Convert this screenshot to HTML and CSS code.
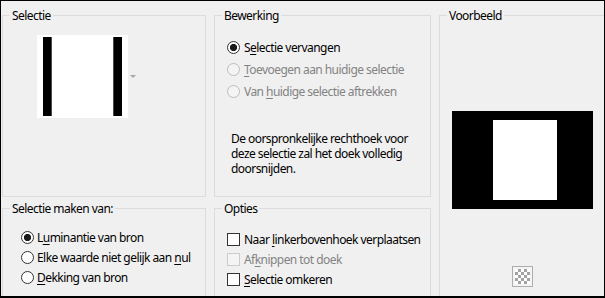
FILE: index.html
```html
<!DOCTYPE html>
<html lang="nl">
<head>
  <meta charset="UTF-8">
  <title>Selectie uit masker</title>
  <link rel="stylesheet" href="styles.css">
</head>
<body>

  <div class="dialog">
    <fieldset class="group group-selection">
      <legend>Selectie</legend>
      <div class="thumb-row">
        <div class="thumb">
          <span class="bar bar-left"></span>
          <span class="bar bar-right"></span>
        </div>
        <span class="drop-arrow"></span>
      </div>
    </fieldset>

    <fieldset class="group group-edit">
      <legend>Bewerking</legend>
      <div class="choices wide">
        <div class="choice"><span class="radio checked"></span><span>S<u>e</u>lectie vervangen</span></div>
        <div class="choice disabled"><span class="radio"></span><span><u>T</u>oevoegen aan huidige selectie</span></div>
        <div class="choice disabled"><span class="radio"></span><span>Van <u>h</u>uidige selectie aftrekken</span></div>
      </div>
      <p class="note">De oorspronkelijke rechthoek voor deze selectie zal het doek volledig doorsnijden.</p>
    </fieldset>

    <fieldset class="group group-preview">
      <legend>Voorbeeld</legend>
      <div class="preview">
        <div class="preview-inner"></div>
      </div>
      <div class="checker-btn"><span class="checker"></span></div>
    </fieldset>

    <fieldset class="group group-source">
      <legend>Selectie maken van:</legend>
      <div class="choices">
        <div class="choice"><span class="radio checked"></span><span>L<u>u</u>minantie van bron</span></div>
        <div class="choice"><span class="radio"></span><span>Elke waarde niet gelijk aan <u>n</u>ul</span></div>
        <div class="choice"><span class="radio"></span><span><u>D</u>ekking van bron</span></div>
      </div>
    </fieldset>

    <fieldset class="group group-options">
      <legend>Opties</legend>
      <div class="choices">
        <div class="choice"><span class="check"></span><span>Naar <u>l</u>inkerbovenhoek verplaatsen</span></div>
        <div class="choice disabled"><span class="check"></span><span>Af<u>k</u>nippen tot doek</span></div>
        <div class="choice"><span class="check"></span><span><u>S</u>electie omkeren</span></div>
      </div>
    </fieldset>
  </div>

</body>
</html>
```

FILE: styles.css
```css
body {
  margin: 0;
  font-family: 'Noto Sans', 'Open Sans', sans-serif;
  font-size: 12px;
  letter-spacing: -0.55px;
  color: #000;
  background-color: #f0f0f0;
}

.dialog {
  width: 605px;
  height: 298px;
  box-sizing: border-box;
  border: 1px solid #000;
  border-bottom-width: 2px;
  padding: 7px 0 0 1px;
  background-color: #f0f0f0;
  overflow: hidden;
  display: grid;
  grid-template-columns: 204px 217px 180px;
  grid-template-rows: 189px 110px;
  column-gap: 8px;
  row-gap: 4px;
}

.group {
  margin: 0;
  padding: 0;
  min-width: 0;
  border: 1px solid #dcdcdc;
}

.group legend {
  margin-left: 7px;
  padding: 0 2px;
  line-height: 15px;
}

.group-preview {
  grid-column: 3;
  grid-row: 1 / span 2;
}

/* selection thumbnail */
.thumb-row {
  display: flex;
  align-items: center;
  gap: 2px;
  margin: 12px 0 0 34px;
}

.thumb {
  width: 91px;
  height: 83px;
  box-sizing: border-box;
  padding: 2px 6px;
  background: #fff;
  display: flex;
  justify-content: space-between;
}

.bar {
  width: 9px;
  box-sizing: border-box;
  background: #000;
}

.bar-left {
  border-right: 1px solid #4a4a4a;
}

.bar-right {
  border-left: 1px solid #4a4a4a;
}

.drop-arrow {
  width: 0;
  height: 0;
  border-left: 3px solid transparent;
  border-right: 3px solid transparent;
  border-top: 3px solid #a8a8a8;
}

/* radio buttons and check boxes */
.choices {
  margin: 11px 0 0 18px;
}

.group-edit .choices {
  margin: 13px 0 0 12px;
}

.group-options .choices {
  margin: 13px 0 0 12px;
}

.choice {
  display: flex;
  align-items: center;
  gap: 3px;
  height: 20px;
  white-space: nowrap;
}

.choices.wide .choice {
  height: 22px;
  gap: 4px;
}

.group-options .choice {
  gap: 4px;
}

.choice u {
  text-decoration-thickness: 1px;
  text-underline-offset: 2px;
}

.choice.disabled {
  color: #838383;
}

.radio {
  flex: none;
  width: 13px;
  height: 13px;
  box-sizing: border-box;
  border: 1px solid #333;
  border-radius: 50%;
  background: #fff;
}

.radio.checked {
  background: radial-gradient(circle, #1a1a1a 0 3.3px, #fff 3.9px);
}

.disabled .radio {
  border-color: #bcbcbc;
  background: #f4f4f4;
}

.check {
  flex: none;
  width: 13px;
  height: 13px;
  box-sizing: border-box;
  border: 1px solid #333;
  background: #fff;
}

.disabled .check {
  border-color: #cccccc;
  background: #f4f4f4;
}

.note {
  margin: 29px 0 0 16px;
  line-height: 15px;
  width: 190px;
}

/* preview */
.preview {
  width: 141px;
  height: 98px;
  box-sizing: border-box;
  margin: 88px 0 0 12px;
  padding: 9px 36px 9px 41px;
  background: #000;
}

.preview-inner {
  width: 64px;
  height: 80px;
  background: #fff;
}

.checker-btn {
  width: 21px;
  height: 21px;
  box-sizing: border-box;
  margin: 57px 0 0 72px;
  padding: 2px;
  border: 1px solid #adadad;
  background: #f4f4f4;
}

.checker {
  display: block;
  width: 15px;
  height: 15px;
  background: repeating-conic-gradient(#a3a3a3 0 25%, #fff 0 50%) 0 0 / 6px 6px;
}
```
